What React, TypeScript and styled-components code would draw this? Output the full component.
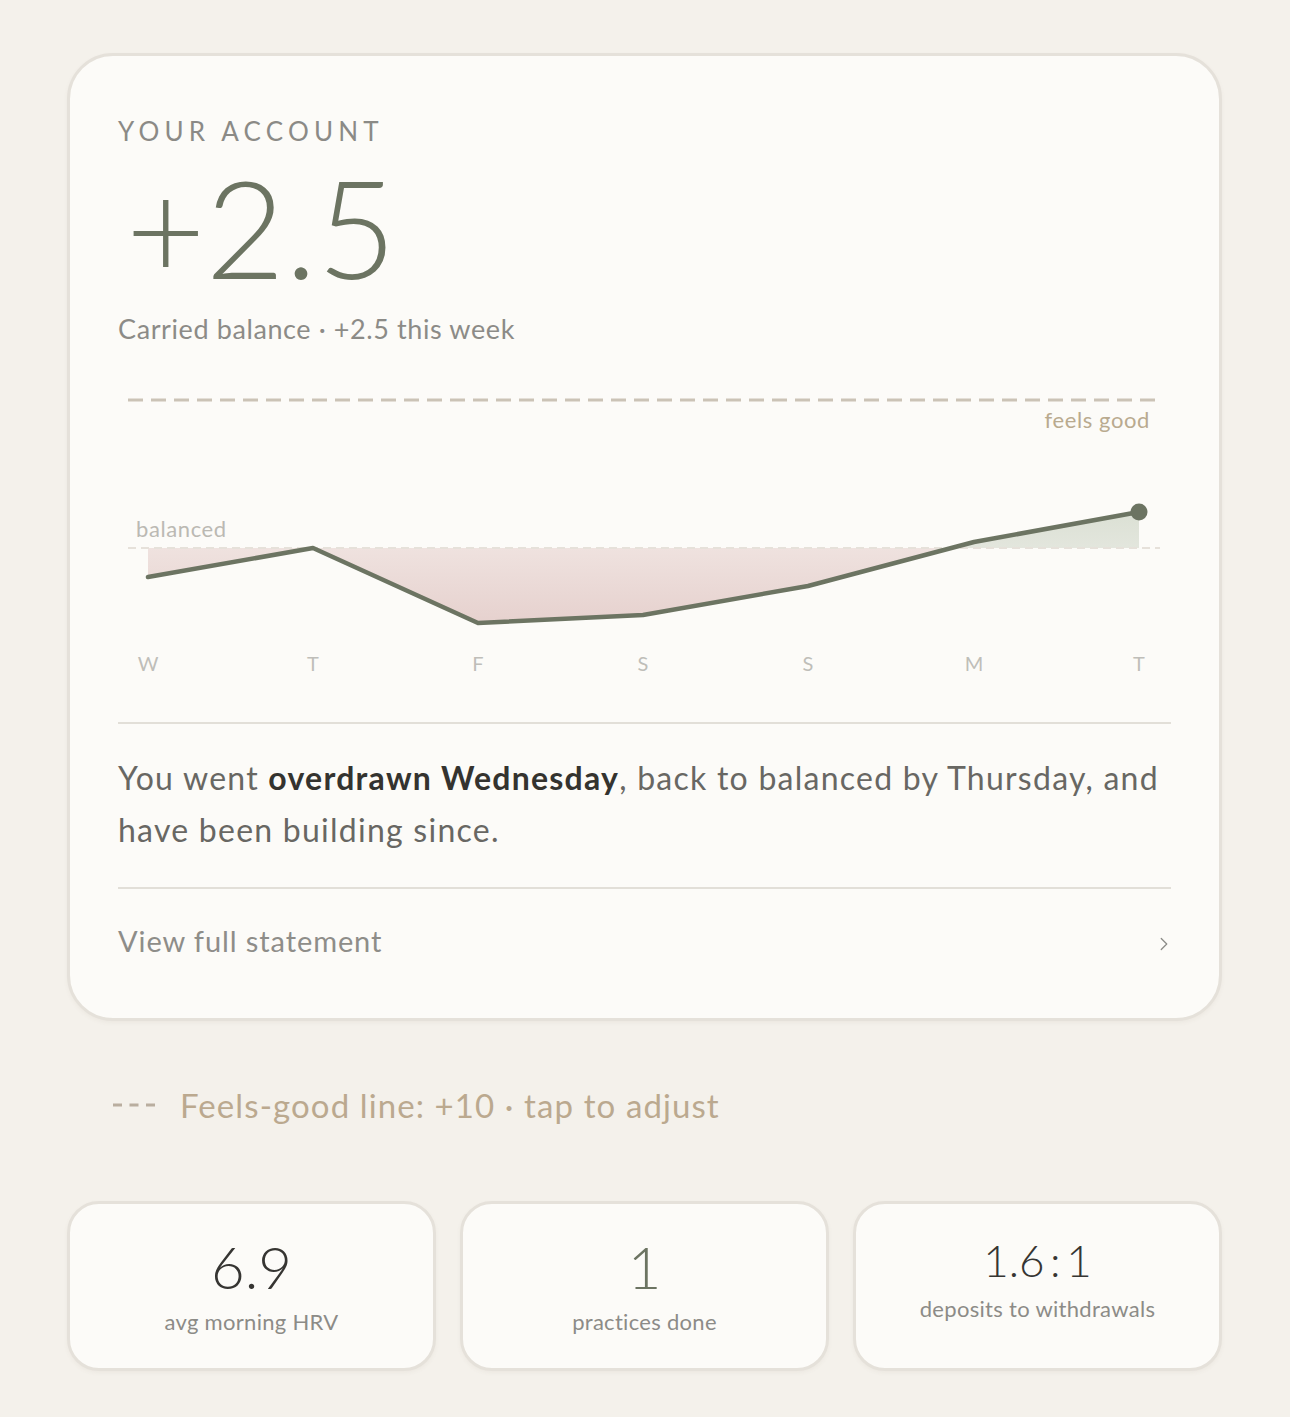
import React from 'react'
import styled, { createGlobalStyle } from 'styled-components'
import { ChevronRight } from 'lucide-react'

const GlobalStyle = createGlobalStyle`
  html, body {
    margin: 0;
    padding: 0;
    background: #f4f1eb;
  }
  body {
    font-family: Lato, 'Open Sans', sans-serif;
    -webkit-font-smoothing: antialiased;
  }
`

const days = ['W', 'T', 'F', 'S', 'S', 'M', 'T']
const points: [number, number][] = [
  [30, 197],
  [195, 168],
  [360, 243],
  [525, 235],
  [690, 206],
  [856, 162],
  [1021, 132],
]
const BASE = 168
const CROSS_X = 833

const linePath = points.map(([x, y], i) => `${i === 0 ? 'M' : 'L'}${x} ${y}`).join(' ')
const debtPath = `M30 ${BASE} L30 197 ${points
  .slice(1, 5)
  .map(([x, y]) => `L${x} ${y}`)
  .join(' ')} L${CROSS_X} ${BASE} Z`
const savedPath = `M${CROSS_X} ${BASE} L856 162 L1021 132 L1021 ${BASE} Z`

export default function App() {
  return (
    <Page>
      <GlobalStyle />
      <Card>
        <Eyebrow>YOUR ACCOUNT</Eyebrow>
        <Balance>+2.5</Balance>
        <Subtitle>Carried balance · +2.5 this week</Subtitle>

        <Chart width={1054} height={300} viewBox="0 0 1054 300">
          <defs>
            <linearGradient id="debt" x1="0" y1="0" x2="0" y2="1">
              <stop offset="0" stopColor="#efe2df" />
              <stop offset="1" stopColor="#e6d1ce" />
            </linearGradient>
            <linearGradient id="saved" x1="0" y1="0" x2="0" y2="1">
              <stop offset="0" stopColor="#dbe0d4" />
              <stop offset="1" stopColor="#e3e6dd" />
            </linearGradient>
          </defs>
          <line x1={10} y1={20} x2={1042} y2={20} stroke="#cbc3b6" strokeWidth={3} strokeDasharray="15 8" />
          <ChartLabel x={1032} y={48} textAnchor="end" fill="#b9aa8f">
            feels good
          </ChartLabel>
          <ChartLabel x={18} y={157} fill="#bbb9b3">
            balanced
          </ChartLabel>
          <path d={debtPath} fill="url(#debt)" />
          <path d={savedPath} fill="url(#saved)" />
          <line x1={10} y1={BASE} x2={1042} y2={BASE} stroke="#e6e1da" strokeWidth={2} strokeDasharray="8 5" />
          <path d={linePath} fill="none" stroke="#6c7462" strokeWidth={4.5} strokeLinejoin="round" strokeLinecap="round" />
          <circle cx={1021} cy={132} r={8.5} fill="#6c7462" />
          {days.map((d, i) => (
            <DayLabel key={i} x={points[i][0]} y={291} textAnchor="middle">
              {d}
            </DayLabel>
          ))}
        </Chart>

        <Divider />
        <Summary>
          You went <strong>overdrawn Wednesday</strong>, back to balanced by Thursday, and have been building
          since.
        </Summary>
        <Divider />
        <StatementRow>
          <span>View full statement</span>
          <ChevronRight size={22} strokeWidth={1.4} color="#8c8c88" />
        </StatementRow>
      </Card>

      <FeelsGood>
        <svg width={42} height={6} viewBox="0 0 42 6">
          <line x1={0} y1={3} x2={42} y2={3} stroke="#b9ae9f" strokeWidth={3} strokeDasharray="9 7.5" />
        </svg>
        <span>Feels-good line: +10 · tap to adjust</span>
      </FeelsGood>

      <Stats>
        <StatCard>
          <StatValue>6.9</StatValue>
          <StatLabel>avg morning HRV</StatLabel>
        </StatCard>
        <StatCard>
          <StatValue $tone="green">1</StatValue>
          <StatLabel>practices done</StatLabel>
        </StatCard>
        <StatCard>
          <StatValue $small>{'1.6\u2009:\u20091'}</StatValue>
          <StatLabel>deposits to withdrawals</StatLabel>
        </StatCard>
      </Stats>
    </Page>
  )
}

const Page = styled.div`
  width: 1290px;
  min-height: 1417px;
  box-sizing: border-box;
  padding: 53px 68px 46px 67px;
  background: #f4f1eb;
`

const Card = styled.div`
  box-sizing: border-box;
  height: 968px;
  background: #fcfbf8;
  border: 3px solid #e5e1da;
  border-radius: 46px;
  padding: 59px 48px 0 48px;
  display: flex;
  flex-direction: column;
  box-shadow: 0 2px 4px rgba(120, 110, 90, 0.06);
`

const Eyebrow = styled.div`
  font-size: 26px;
  line-height: 32px;
  letter-spacing: 5.2px;
  color: #8b8a86;
`

const Balance = styled.div`
  margin-top: 9px;
  margin-left: 8px;
  font-size: 137px;
  line-height: 140px;
  font-weight: 300;
  color: #6c7462;
`

const Subtitle = styled.div`
  margin-top: 16px;
  font-size: 27px;
  line-height: 34px;
  letter-spacing: 0.6px;
  color: #8c8b87;
`

const Chart = styled.svg`
  display: block;
  margin: 34px 0 42px;
`

const ChartLabel = styled.text`
  font-family: Lato, sans-serif;
  font-size: 22px;
  letter-spacing: 0.6px;
`

const DayLabel = styled.text`
  font-family: Lato, sans-serif;
  font-size: 20px;
  fill: #bfbeb9;
`

const Divider = styled.div`
  height: 2px;
  background: #e2dfd8;
`

const Summary = styled.p`
  margin: 28px 0 31px;
  font-size: 32px;
  line-height: 52px;
  letter-spacing: 1.25px;
  color: #686763;

  strong {
    font-weight: 700;
    color: #34332f;
  }
`

const StatementRow = styled.div`
  margin-top: 34px;
  display: flex;
  align-items: center;
  justify-content: space-between;
  font-size: 29px;
  line-height: 36px;
  letter-spacing: 0.9px;
  color: #8e8d89;

  svg {
    margin: 6px -4px 0 0;
  }
`

const FeelsGood = styled.div`
  margin-top: 64px;
  padding-left: 46px;
  display: flex;
  align-items: center;
  gap: 25px;
  font-size: 33px;
  line-height: 40px;
  letter-spacing: 1.1px;
  color: #bba98f;
`

const Stats = styled.div`
  margin-top: 76px;
  display: grid;
  grid-template-columns: repeat(3, 1fr);
  gap: 24px;
`

const StatCard = styled.div`
  box-sizing: border-box;
  height: 170px;
  background: #fcfbf8;
  border: 3px solid #e5e1da;
  border-radius: 32px;
  display: flex;
  flex-direction: column;
  align-items: center;
  justify-content: center;
  box-shadow: 0 2px 4px rgba(120, 110, 90, 0.06);
`

const StatValue = styled.div<{ $tone?: 'green'; $small?: boolean }>`
  font-size: ${(p) => (p.$small ? '44px' : '58px')};
  line-height: ${(p) => (p.$small ? '50px' : '62px')};
  font-weight: 300;
  color: ${(p) => (p.$tone === 'green' ? '#6c7462' : '#363532')};
  margin-top: ${(p) => (p.$small ? '-14px' : '0')};
`

const StatLabel = styled.div`
  margin-top: 10px;
  font-size: 22px;
  line-height: 28px;
  letter-spacing: 0.3px;
  color: #8c8b87;
`
